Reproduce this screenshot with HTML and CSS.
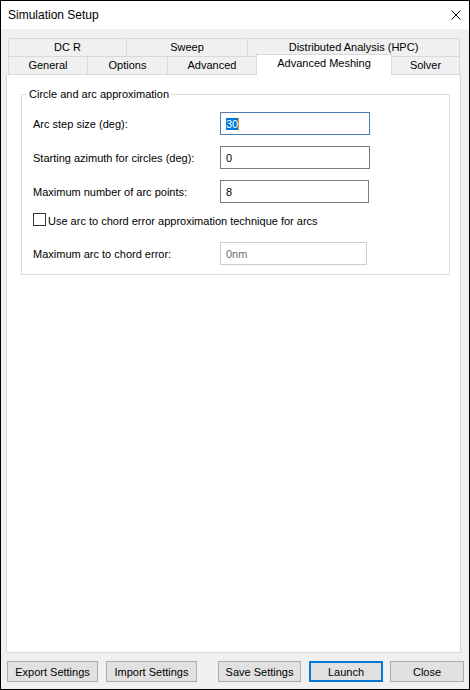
FILE: index.html
```html
<!DOCTYPE html>
<html>
<head>
<meta charset="utf-8">
<title>Simulation Setup</title>
<link rel="stylesheet" href="styles.css">
</head>
<body>
<div class="window">
  <div class="titlebar">
    <span class="title">Simulation Setup</span>
    <svg class="close-x" width="10" height="10" viewBox="0 0 10 10"><path d="M0.5 0.5 L9.5 9.5 M9.5 0.5 L0.5 9.5" stroke="#000" stroke-width="1" fill="none"/></svg>
  </div>
  <div class="client">
    <div class="tabs">
      <div class="tab-row">
        <div class="tab w-dcr">DC R</div>
        <div class="tab w-sweep">Sweep</div>
        <div class="tab w-dist">Distributed Analysis (HPC)</div>
      </div>
      <div class="tab-row">
        <div class="tab w-general">General</div>
        <div class="tab w-options">Options</div>
        <div class="tab w-advanced">Advanced</div>
        <div class="tab selected w-meshing">Advanced Meshing</div>
        <div class="tab w-solver">Solver</div>
      </div>
    </div>
    <div class="panel">
      <fieldset class="group">
        <legend>Circle and arc approximation</legend>
        <div class="field">
          <span class="label">Arc step size (deg):</span>
          <div class="input focused w150"><span class="sel">30</span><span class="caret"></span></div>
        </div>
        <div class="field">
          <span class="label">Starting azimuth for circles (deg):</span>
          <div class="input w150">0</div>
        </div>
        <div class="field">
          <span class="label">Maximum number of arc points:</span>
          <div class="input w149">8</div>
        </div>
        <div class="check-row">
          <span class="box"></span>
          <span class="check-label">Use arc to chord error approximation technique for arcs</span>
        </div>
        <div class="field field-last">
          <span class="label">Maximum arc to chord error:</span>
          <div class="input disabled w147">0nm</div>
        </div>
      </fieldset>
    </div>
    <div class="buttons">
      <button class="btn b-export">Export Settings</button>
      <button class="btn b-import">Import Settings</button>
      <button class="btn b-save">Save Settings</button>
      <button class="btn b-launch default">Launch</button>
      <button class="btn b-close">Close</button>
    </div>
  </div>
</div>
</body>
</html>
```
FILE: styles.css
```css
* { box-sizing: border-box; }
html, body { margin: 0; padding: 0; background: #fff; }
body {
  font-family: "Liberation Sans", Arial, sans-serif;
  font-size: 11px;
  color: #000;
}
.window {
  width: 470px;
  height: 690px;
  border: 1px solid #000;
  display: flex;
  flex-direction: column;
  background: #f0f0f0;
}
.titlebar {
  height: 28px;
  background: #fff;
  display: flex;
  align-items: center;
  justify-content: space-between;
  padding: 0 8px 0 7px;
}
.title { font-size: 12px; }
.close-x { display: block; }

.client {
  flex: 1;
  display: flex;
  flex-direction: column;
  padding: 9px 0 7px 0;
}
.tabs {
  margin-left: 7px;
  display: flex;
  flex-direction: column;
}
.tab-row {
  display: flex;
  align-items: flex-start;
  height: 18px;
}
.tab {
  height: 18px;
  border: 1px solid #d9d9d9;
  border-bottom: none;
  background: #f0f0f0;
  display: flex;
  align-items: center;
  justify-content: center;
  line-height: 13px;
  white-space: nowrap;
}
.tab + .tab { margin-left: -1px; }
.tab.selected {
  position: relative;
  z-index: 1;
  background: #fff;
  height: 21px;
  margin-top: -2px;
  margin-bottom: -1px;
  align-items: flex-start;
  padding-top: 2px;
}
.w-dcr { width: 119px; }
.w-sweep { width: 122px; }
.w-dist { width: 213px; }
.w-general { width: 80px; }
.w-options { width: 81px; }
.w-advanced { width: 90px; }
.w-meshing { width: 136px; }
.w-solver { width: 69px; }

.panel {
  flex: 1;
  width: 455px;
  margin: 0 0 8px 5px;
  border: 1px solid #d9d9d9;
  background: #fff;
}
.group {
  margin: 13px 10px 0 14px;
  border: 1px solid #dcdcdc;
  padding: 11px 0 9px 11px;
  min-width: 0;
}
.group legend {
  padding: 0 2px;
  margin-left: -6px;
  line-height: 13px;
}
.field {
  display: flex;
  align-items: center;
  height: 23px;
}
.field + .field { margin-top: 11px; }
.label { width: 187px; white-space: nowrap; }
.input {
  height: 23px;
  border: 1px solid #7a7a7a;
  background: #fff;
  padding-left: 5px;
  display: flex;
  align-items: center;
}
.input.focused { border-color: #4a7eb0; }
.input.disabled { border-color: #cccccc; color: #6d6d6d; }
.sel {
  background: #0078d7;
  color: #fff;
  line-height: 12px;
}
.caret {
  width: 1px;
  height: 12px;
  background: #f08a24;
}
.w150 { width: 150px; }
.w149 { width: 149px; }
.w147 { width: 147px; }

.check-row {
  display: flex;
  align-items: flex-start;
  height: 14px;
  margin-top: 10px;
}
.box {
  width: 13px;
  height: 13px;
  border: 1px solid #333;
  background: #fff;
  margin-right: 2px;
}
.check-label {
  line-height: 13px;
  margin-top: 2px;
  white-space: nowrap;
}
.field.field-last { margin-top: 15px; }

.buttons {
  display: flex;
  height: 21px;
}
.btn {
  height: 21px;
  padding: 0;
  border: 1px solid #adadad;
  background: #e1e1e1;
  font-family: inherit;
  font-size: 11px;
  color: #000;
  display: flex;
  align-items: center;
  justify-content: center;
}
.btn.default { border: 2px solid #0078d7; }
.b-export { margin-left: 6px; width: 91px; }
.b-import { margin-left: 8px; width: 91px; }
.b-save { margin-left: 21px; width: 83px; }
.b-launch { margin-left: 8px; width: 74px; }
.b-close { margin-left: 7px; width: 74px; }
```
